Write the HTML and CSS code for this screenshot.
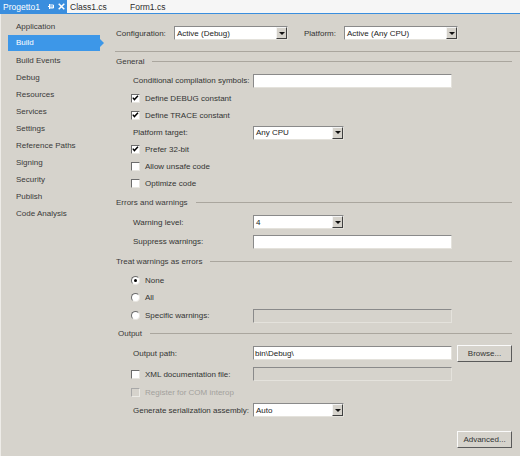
FILE: index.html
```html
<!DOCTYPE html>
<html>
<head>
<meta charset="utf-8">
<link rel="stylesheet" href="styles.css">
</head>
<body>
<div class="tabs">
  <div class="tab active">
    <span class="tab-title">Progetto1</span>
    <svg class="pin" width="6" height="5" viewBox="0 0 6 5"><path d="M0 2.5H1.5M1.5 0V5M1.5 1H5.5V4H1.5M1.5 3H5.5" stroke="#fff" stroke-width="1" fill="none"/></svg>
    <svg class="close" width="7" height="7" viewBox="0 0 7 7"><path d="M0.7 0.7L6.3 6.3M6.3 0.7L0.7 6.3" stroke="#fff" stroke-width="1.5"/></svg>
  </div>
  <div class="tab t-class">Class1.cs</div>
  <div class="tab t-form">Form1.cs</div>
</div>
<div class="main">
  <nav class="side">
    <div class="side-item">Application</div>
    <div class="side-item selected">Build</div>
    <div class="side-item">Build Events</div>
    <div class="side-item">Debug</div>
    <div class="side-item">Resources</div>
    <div class="side-item">Services</div>
    <div class="side-item">Settings</div>
    <div class="side-item">Reference Paths</div>
    <div class="side-item">Signing</div>
    <div class="side-item">Security</div>
    <div class="side-item">Publish</div>
    <div class="side-item">Code Analysis</div>
  </nav>
  <div class="content">
    <div class="config-row">
      <span class="cfg-label">Configuration:</span>
      <div class="combo cfg-combo"><span class="combo-text">Active (Debug)</span><span class="drop"><i></i></span></div>
      <span class="plat-label">Platform:</span>
      <div class="combo cfg-combo"><span class="combo-text">Active (Any CPU)</span><span class="drop"><i></i></span></div>
    </div>
    <div class="separator"></div>

    <div class="section h19">General</div>
    <div class="row field-row h19">
      <span class="label">Conditional compilation symbols:</span>
      <div class="textbox"></div>
    </div>
    <div class="row h17"><span class="check checked"></span><span>Define DEBUG constant</span></div>
    <div class="row h17"><span class="check checked"></span><span>Define TRACE constant</span></div>
    <div class="row field-row h17">
      <span class="label">Platform target:</span>
      <div class="combo narrow"><span class="combo-text">Any CPU</span><span class="drop"><i></i></span></div>
    </div>
    <div class="row h17"><span class="check checked"></span><span>Prefer 32-bit</span></div>
    <div class="row h17"><span class="check"></span><span>Allow unsafe code</span></div>
    <div class="row h17"><span class="check"></span><span>Optimize code</span></div>

    <div class="section h20">Errors and warnings</div>
    <div class="row field-row h20">
      <span class="label">Warning level:</span>
      <div class="combo narrow"><span class="combo-text">4</span><span class="drop"><i></i></span></div>
    </div>
    <div class="row field-row h19">
      <span class="label">Suppress warnings:</span>
      <div class="textbox"></div>
    </div>

    <div class="section h20">Treat warnings as errors</div>
    <div class="row h18"><span class="radio on"></span><span>None</span></div>
    <div class="row h17"><span class="radio"></span><span>All</span></div>
    <div class="row field-row radio-field h19">
      <span class="label"><span class="radio"></span><span>Specific warnings:</span></span>
      <div class="textbox disabled"></div>
    </div>

    <div class="section out h17">Output</div>
    <div class="row field-row h22">
      <span class="label">Output path:</span>
      <div class="textbox"><span class="tb-text">bin\Debug\</span></div>
      <button class="btn">Browse...</button>
    </div>
    <div class="row field-row radio-field h20">
      <span class="label"><span class="check"></span><span>XML documentation file:</span></span>
      <div class="textbox disabled"></div>
    </div>
    <div class="row h16 dim"><span class="check disabled"></span><span>Register for COM interop</span></div>
    <div class="row field-row h20">
      <span class="label">Generate serialization assembly:</span>
      <div class="combo narrow"><span class="combo-text">Auto</span><span class="drop"><i></i></span></div>
    </div>
    <div class="actions">
      <button class="btn">Advanced...</button>
    </div>
  </div>
</div>
</body>
</html>
```

FILE: styles.css
```css
* { box-sizing: border-box; }

html, body {
  margin: 0;
  padding: 0;
  width: 520px;
  height: 456px;
  overflow: hidden;
  background: #d6d3cc;
  font-family: "Liberation Sans", Arial, sans-serif;
  font-size: 8px;
  color: #333;
}

.tabs {
  height: 14px;
  background: #f6f6f6;
  border-bottom: 1px solid #3a8ede;
  display: flex;
  align-items: stretch;
  font-size: 8.5px;
}

.tab {
  display: flex;
  align-items: center;
  height: 13px;
  color: #2c2c2c;
}

.tab.active {
  width: 67px;
  background: #3a8ede;
  color: #fff;
  padding-left: 3px;
}

.tab-title { width: 45px; }
.pin { margin-right: 4px; }
.t-class { padding-left: 3px; width: 63px; }

.main {
  display: flex;
  height: 442px;
  border-left: 1px solid #eeece8;
}

.side {
  width: 114px;
  padding: 4px 0 0 7px;
}

.side-item {
  height: 17px;
  line-height: 17px;
  padding-left: 8px;
  width: 92px;
  position: relative;
  color: #3a3a3a;
}

.side-item.selected {
  background: #3d97e8;
  color: #fff;
  height: 16px;
  line-height: 16px;
  margin-bottom: 1px;
}

.side-item.selected::after {
  content: "";
  position: absolute;
  right: -4px;
  top: 4px;
  border-left: 4px solid #3d97e8;
  border-top: 4px solid transparent;
  border-bottom: 4px solid transparent;
}

.content {
  flex: 1;
  padding: 4px 8px 0 0;
}

.config-row {
  display: flex;
  align-items: center;
  height: 30px;
}

.cfg-label { width: 59px; padding-left: 1px; }
.plat-label { width: 40px; margin-left: 16px; }
.cfg-combo { width: 114px; }

.separator {
  margin: 3px -8px 0 0;
  border-top: 1px solid #aaa69e;
}

.section {
  display: flex;
  align-items: center;
  padding-left: 1px;
  color: #3a3a3a;
}

.section::after {
  content: "";
  flex: 1;
  margin-left: 8px;
  border-top: 1px solid #aaa69e;
}

.section.out { padding-left: 3px; }

.h16 { height: 16px; }
.h17 { height: 17px; }
.h18 { height: 18px; }
.h19 { height: 19px; }
.h20 { height: 20px; }
.h22 { height: 22px; }

.row {
  display: flex;
  align-items: center;
  padding-left: 17px;
}

.field-row .label {
  width: 121px;
  padding-left: 1px;
  display: flex;
  align-items: center;
}

.radio-field .label { padding-left: 0; }

.textbox {
  width: 199px;
  height: 14px;
  background: #fff;
  border: 1px solid;
  border-color: #8a8a8a #e4e2dc #e4e2dc #8a8a8a;
  display: flex;
  align-items: center;
  padding-left: 1px;
  color: #222;
}

.textbox.disabled { background: #d6d3cc; }

.combo {
  height: 14px;
  background: #fff;
  border: 1px solid;
  border-color: #8a8a8a #e4e2dc #e4e2dc #8a8a8a;
  display: flex;
  align-items: center;
  justify-content: space-between;
  color: #222;
}

.combo.narrow { width: 91px; }

.combo-text { padding-left: 2px; }

.drop {
  width: 11px;
  height: 12px;
  background: #d6d3cc;
  border: 1px solid;
  border-color: #f4f4f4 #404040 #404040 #f4f4f4;
  display: flex;
  align-items: center;
  justify-content: center;
}

.drop i {
  border-top: 3px solid #111;
  border-left: 3px solid transparent;
  border-right: 3px solid transparent;
}

.check {
  width: 9px;
  height: 9px;
  margin: 0 5px 0 -1px;
  background: #fff;
  border: 1px solid;
  border-color: #6c6c6c #e8e6e0 #e8e6e0 #6c6c6c;
  flex: none;
}

.check.checked {
  background: #fff url("data:image/svg+xml;utf8,<svg xmlns='http://www.w3.org/2000/svg' width='7' height='7' viewBox='0 0 7 7'><path d='M0.8 2.6L2.4 4.6L6 0.8' stroke='black' stroke-width='1.4' fill='none'/></svg>") no-repeat 0 0;
}

.check.disabled {
  background: #d6d3cc;
  border-color: #a8a8a8 #ecebe6 #ecebe6 #a8a8a8;
}

.dim { color: #a3a19c; }

.radio {
  width: 9px;
  height: 9px;
  border-radius: 50%;
  background: #fff;
  border: 1px solid;
  border-color: #6c6c6c #e8e6e0 #e8e6e0 #6c6c6c;
  margin: 0 5px 0 -1px;
  position: relative;
  flex: none;
}

.radio.on::after {
  content: "";
  position: absolute;
  left: 2px;
  top: 2px;
  width: 3px;
  height: 3px;
  border-radius: 50%;
  background: #000;
}

.btn {
  font: inherit;
  color: #333;
  background: #d6d3cc;
  border: 1px solid;
  border-color: #fafafa #5a5a5a #5a5a5a #fafafa;
  width: 55px;
  height: 17px;
  padding: 0;
  margin-left: 5px;
}

.actions {
  display: flex;
  justify-content: flex-end;
  padding-top: 11px;
}
```
